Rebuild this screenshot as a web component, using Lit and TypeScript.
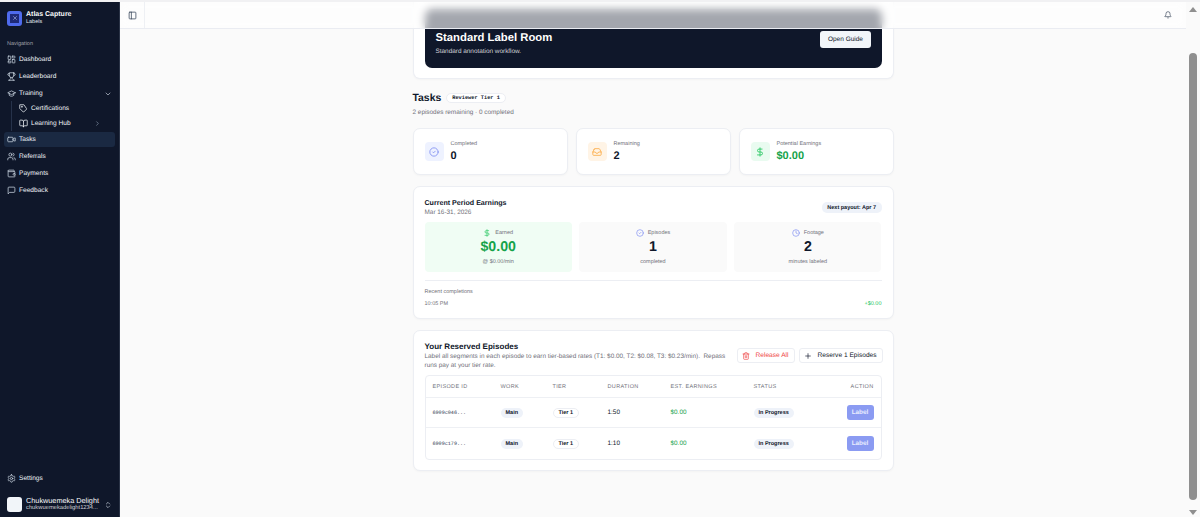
import { LitElement, html, css, svg } from "lit";
import { customElement } from "lit/decorators.js";

const ic = (body: unknown, size = 16) => html`<svg class="ic" width=${size} height=${size} viewBox="0 0 24 24" fill="none" stroke="currentColor" stroke-width="2" stroke-linecap="round" stroke-linejoin="round">${body}</svg>`;

const I = {
  dash: svg`<rect x="3" y="3" width="7" height="9" rx="1"/><rect x="14" y="3" width="7" height="5" rx="1"/><rect x="14" y="12" width="7" height="9" rx="1"/><rect x="3" y="16" width="7" height="5" rx="1"/>`,
  trophy: svg`<path d="M6 9H4.5a2.5 2.5 0 0 1 0-5H6"/><path d="M18 9h1.5a2.5 2.5 0 0 0 0-5H18"/><path d="M4 22h16"/><path d="M10 14.66V17c0 .55-.47.98-.97 1.21C7.85 18.75 7 20.24 7 22"/><path d="M14 14.66V17c0 .55.47.98.97 1.21C16.15 18.75 17 20.24 17 22"/><path d="M18 2H6v7a6 6 0 0 0 12 0V2Z"/>`,
  grad: svg`<path d="M22 10 12 5 2 10l10 5 10-5Z"/><path d="M6 12v5c3 3 9 3 12 0v-5"/>`,
  chevD: svg`<path d="m6 9 6 6 6-6"/>`,
  chevR: svg`<path d="m9 18 6-6-6-6"/>`,
  tag: svg`<path d="M12 2H2v10l9.29 9.29a1 1 0 0 0 1.41 0l7.59-7.59a1 1 0 0 0 0-1.41Z"/><circle cx="7.5" cy="7.5" r="1"/>`,
  book: svg`<path d="M12 7v14"/><path d="M3 18a1 1 0 0 1-1-1V4a1 1 0 0 1 1-1h5a4 4 0 0 1 4 4 4 4 0 0 1 4-4h5a1 1 0 0 1 1 1v13a1 1 0 0 1-1 1h-6a3 3 0 0 0-3 3 3 3 0 0 0-3-3Z"/>`,
  video: svg`<path d="m16 13 5.2 3.5a.5.5 0 0 0 .8-.4V7.9a.5.5 0 0 0-.8-.4L16 11"/><rect x="2" y="6" width="14" height="12" rx="2"/>`,
  users: svg`<path d="M16 21v-2a4 4 0 0 0-4-4H6a4 4 0 0 0-4 4v2"/><circle cx="9" cy="7" r="4"/><path d="M22 21v-2a4 4 0 0 0-3-3.87"/><path d="M16 3.13a4 4 0 0 1 0 7.75"/>`,
  wallet: svg`<path d="M19 7V4a1 1 0 0 0-1-1H5a2 2 0 0 0 0 4h15a1 1 0 0 1 1 1v4h-3a2 2 0 0 0 0 4h3a1 1 0 0 0 1-1v-2a1 1 0 0 0-1-1"/><path d="M3 5v14a2 2 0 0 0 2 2h15a1 1 0 0 0 1-1v-4"/>`,
  msg: svg`<path d="M21 15a2 2 0 0 1-2 2H7l-4 4V5a2 2 0 0 1 2-2h14a2 2 0 0 1 2 2z"/>`,
  gear: svg`<path d="M12.22 2h-.44a2 2 0 0 0-2 2v.18a2 2 0 0 1-1 1.73l-.43.25a2 2 0 0 1-2 0l-.15-.08a2 2 0 0 0-2.73.73l-.22.38a2 2 0 0 0 .73 2.73l.15.1a2 2 0 0 1 1 1.72v.51a2 2 0 0 1-1 1.74l-.15.09a2 2 0 0 0-.73 2.73l.22.38a2 2 0 0 0 2.73.73l.15-.08a2 2 0 0 1 2 0l.43.25a2 2 0 0 1 1 1.73V20a2 2 0 0 0 2 2h.44a2 2 0 0 0 2-2v-.18a2 2 0 0 1 1-1.73l.43-.25a2 2 0 0 1 2 0l.15.08a2 2 0 0 0 2.73-.73l.22-.39a2 2 0 0 0-.73-2.73l-.15-.08a2 2 0 0 1-1-1.74v-.5a2 2 0 0 1 1-1.74l.15-.09a2 2 0 0 0 .73-2.73l-.22-.38a2 2 0 0 0-2.73-.73l-.15.08a2 2 0 0 1-2 0l-.43-.25a2 2 0 0 1-1-1.73V4a2 2 0 0 0-2-2z"/><circle cx="12" cy="12" r="3"/>`,
  updown: svg`<path d="m7 15 5 5 5-5"/><path d="m7 9 5-5 5 5"/>`,
  panel: svg`<rect width="18" height="18" x="3" y="3" rx="2"/><path d="M9 3v18"/>`,
  bell: svg`<path d="M10.27 21a2 2 0 0 0 3.46 0"/><path d="M3.26 15.33A1 1 0 0 0 4 17h16a1 1 0 0 0 .74-1.67C19.41 13.96 18 12.5 18 8A6 6 0 0 0 6 8c0 4.5-1.41 5.96-2.74 7.33"/>`,
  check: svg`<circle cx="12" cy="12" r="10"/><path d="m9 12 2 2 4-4"/>`,
  inbox: svg`<path d="M22 12h-6l-2 3h-4l-2-3H2"/><path d="M5.45 5.11 2 12v6a2 2 0 0 0 2 2h16a2 2 0 0 0 2-2v-6l-3.45-6.89A2 2 0 0 0 16.76 4H7.24a2 2 0 0 0-1.79 1.11z"/>`,
  dollar: svg`<path d="M12 2v20"/><path d="M17 5H9.5a3.5 3.5 0 0 0 0 7h5a3.5 3.5 0 0 1 0 7H6"/>`,
  clock: svg`<circle cx="12" cy="12" r="10"/><path d="M12 6v6l4 2"/>`,
  trash: svg`<path d="M3 6h18"/><path d="M19 6v14a2 2 0 0 1-2 2H7a2 2 0 0 1-2-2V6"/><path d="M8 6V4a2 2 0 0 1 2-2h4a2 2 0 0 1 2 2v2"/><path d="M10 11v6"/><path d="M14 11v6"/>`,
  plus: svg`<path d="M5 12h14"/><path d="M12 5v14"/>`,
};

@customElement("app-root")
export class AppRoot extends LitElement {
  static styles = css`
    :host { display: block; width: 1200px; height: 517px; overflow: hidden; background: #fff; font-family: "Liberation Sans", Arial, sans-serif; color: #0f172a; text-rendering: geometricPrecision; }
    * { box-sizing: border-box; }
    .ic { display: block; flex: none; }
    .frame { display: flex; flex-direction: column; height: 517px; }
    .topline { height: 2px; flex: none; background: #f1f1f3; }
    .body { display: flex; flex: 1; min-height: 0; }

    .side { width: 120px; flex: none; background: #0f172a; color: #f1f5f9; display: flex; flex-direction: column; padding: 8px 4px 0; font-size: 6.6px; border-right: 1px solid #2a3346; }
    .brand { display: flex; align-items: center; gap: 4px; padding: 0 3px; height: 16px; }
    .logo { width: 15px; height: 15px; background: #4f6bed; border-radius: 3px; display: flex; align-items: center; justify-content: center; }
    .logo i { display: flex; align-items: center; justify-content: center; width: 9px; height: 9px; background: #1e2a78; color: #cbd5ff; }
    .brand b { display: block; font-size: 7px; color: #f8fafc; line-height: 8px; }
    .brand small { display: block; font-size: 5.5px; line-height: 7px; color: #e2e8f0; }
    .navlabel { font-size: 5.5px; color: #a1a1aa; margin: 14px 0 4px 3px; line-height: 8px; }
    .item { display: flex; align-items: center; gap: 3px; height: 15px; margin-bottom: 2px; padding: 0 3px; border-radius: 3px; white-space: nowrap; }
    .item .ic { color: #cbd5e1; }
    .item.active { background: #1a2942; }
    .item .end { margin-left: auto; margin-right: 0; color: #94a3b8; }
    .subs { margin: -2px 0 1px 7px; padding-left: 3px; border-left: 1px solid #26324a; }
    .sub { display: flex; align-items: center; gap: 3px; height: 15px; padding: 0 4px; white-space: nowrap; }
    .sub .end { margin-left: auto; margin-right: 10px; color: #94a3b8; }
    .spacer { flex: 1; }
    .user { display: flex; align-items: center; gap: 4px; padding: 0 3px; height: 15px; margin: 9px 0 5px; }
    .avatar { width: 15px; height: 15px; border-radius: 3px; background: #f1f5f9; flex: none; }
    .user b { display: block; font-size: 7.3px; font-weight: 400; color: #f8fafc; line-height: 8px; white-space: nowrap; }
    .user small { display: block; font-size: 5.8px; line-height: 7px; color: #d4d4d8; white-space: nowrap; }
    .user .end { margin-left: auto; color: #cbd5e1; }

    .mainwrap { flex: 1; position: relative; min-width: 0; background: #fafafa; overflow: hidden; }
    .top { position: absolute; left: 0; right: 0; top: 0; height: 27px; z-index: 2; background: rgba(255,255,255,.62); backdrop-filter: blur(4px); border-bottom: 1px solid #eaecf2; display: flex; align-items: center; justify-content: space-between; }
    .toggle { width: 25px; height: 26px; border-right: 1px solid #eef0f4; display: flex; align-items: center; justify-content: center; color: #334155; }
    .bell { margin-right: 14px; color: #334155; }
    .content { width: 481px; margin: 0 auto; display: flex; flex-direction: column; }
    .card { background: #fff; border: 1px solid #eceef3; border-radius: 7px; box-shadow: 0 1px 2px rgba(15,23,42,.03); }
    .bannercard { padding: 8px 11px 11px; height: 78px; margin-top: -1px; border-top: 0; border-radius: 0 0 7px 7px; }
    .banner { height: 59px; background: #0f172a; border-radius: 7px; color: #fff; display: flex; justify-content: space-between; padding: 21px 11px 0; }
    .banner h2 { font-size: 11.3px; line-height: 16px; margin: 0; font-weight: 700; }
    .banner p { font-size: 6.4px; line-height: 10px; margin: 1px 0 0; color: #d4d4d8; }
    .guide { background: #f1f5f9; color: #0f172a; height: 17px; padding: 0 7.5px; margin-top: 1px; border-radius: 3px; font-size: 6.5px; display: flex; align-items: center; }

    .title { display: flex; align-items: center; gap: 5px; margin-top: 11px; height: 16px; }
    .title h1 { margin: 0; font-size: 10.4px; font-weight: 700; }
    .tier { font-family: "Liberation Mono", monospace; font-size: 5.3px; font-weight: 700; height: 10px; padding: 0 5px; border: 1px solid #eceef3; background: #fff; border-radius: 6px; display: flex; align-items: center; }
    .subtitle { font-size: 6.4px; color: #71717a; margin-top: 2px; line-height: 10px; }

    .stats { display: grid; grid-template-columns: repeat(3, 1fr); gap: 8px; margin-top: 10px; }
    .stat { height: 47px; display: flex; align-items: center; gap: 7px; padding: 0 11px; }
    .sicon { width: 19px; height: 19px; border-radius: 4px; display: flex; align-items: center; justify-content: center; flex: none; }
    .blue { background: #eef2ff; color: #7e8ef1; }
    .orange { background: #fff4e6; color: #fbab45; }
    .green { background: #e9fbf0; color: #22c55e; }
    .sl { font-size: 5.5px; line-height: 7px; color: #71717a; }
    .sv { font-size: 11px; font-weight: 700; line-height: 13px; margin-top: 2px; }
    .sv.g { color: #16a34a; }

    .earn { margin-top: 11px; height: 133px; padding: 10px 11px 0; }
    .earnhead { display: flex; justify-content: space-between; align-items: center; height: 21px; }
    .earnhead b { font-size: 7.1px; display: block; line-height: 10px; }
    .earnhead small { font-size: 6.4px; color: #71717a; display: block; line-height: 10px; }
    .payout { font-size: 5.5px; font-weight: 700; background: #eef2f9; height: 10.5px; border-radius: 5px; padding: 0 5.5px; display: flex; align-items: center; }
    .tiles { display: grid; grid-template-columns: repeat(3, 1fr); gap: 7.5px; margin-top: 4px; }
    .tile { height: 50px; border-radius: 4px; background: #fafafa; display: flex; flex-direction: column; align-items: center; padding-top: 7px; }
    .tile.g { background: #f0fdf4; }
    .tl { display: flex; align-items: center; gap: 4px; font-size: 5.5px; line-height: 8px; color: #71717a; }
    .tl .ic { color: #7e8ef1; }
    .tile.g .tl .ic { color: #22c55e; }
    .tv { font-size: 14.2px; font-weight: 700; line-height: 18px; margin-top: 1px; }
    .tile.g .tv { color: #16a34a; }
    .ts { font-size: 5.5px; color: #71717a; line-height: 8px; margin-top: 2px; }
    .rule { height: 1px; background: #eceef3; margin-top: 8px; }
    .recent { font-size: 5.5px; line-height: 8px; color: #71717a; margin-top: 7px; }
    .row { display: flex; justify-content: space-between; font-size: 5.5px; line-height: 8px; color: #71717a; margin-top: 4px; }
    .row em { font-style: normal; color: #22c55e; }

    .res { margin-top: 11px; height: 141px; padding: 11px 11px 0; }
    .reshead { display: flex; justify-content: space-between; align-items: flex-start; gap: 2px; }
    .reshead b { font-size: 8px; line-height: 10px; display: block; }
    .reshead p { margin: 0; font-size: 6.4px; line-height: 9.3px; color: #71717a; width: 310px; }
    .btns { display: flex; gap: 4px; margin-top: 6px; flex: none; }
    .btn { height: 15px; border: 1px solid #eceef3; border-radius: 3px; background: #fff; display: flex; align-items: center; gap: 6px; font-size: 6.6px; padding: 0 5px 0 4px; white-space: nowrap; }
    .btn.red { color: #ef4444; }
    .tablebox { border: 1px solid #eceef3; border-radius: 4px; margin-top: 4px; height: 85px; }
    .gridrow { display: grid; grid-template-columns: 68px 52px 55px 63px 83px 1fr 60px; align-items: center; padding: 1px 7px 0; }
    .gridrow.h { height: 22px; font-size: 5.5px; letter-spacing: .35px; color: #71717a; border-bottom: 1px solid #eef0f4; }
    .gridrow.d { height: 30.5px; font-size: 6.4px; border-bottom: 1px solid #eef0f4; }
    .gridrow.d:last-child { border-bottom: 0; }
    .r { text-align: right; justify-self: end; }
    .mono { font-family: "Liberation Mono", monospace; font-size: 5.1px; color: #334155; }
    .pill { display: inline-flex; align-items: center; justify-self: start; height: 10px; padding: 0 5px; border-radius: 5px; background: #eef2f9; font-size: 5.5px; font-weight: 700; }
    .pill.o { background: #fff; border: 1px solid #eceef3; }
    .money { color: #16a34a; }
    .label { width: 27px; height: 15px; background: #8b9bf2; color: #e9edff; border-radius: 3px; font-size: 6.4px; font-weight: 700; display: flex; align-items: center; justify-content: center; justify-self: end; }

    .sb { width: 14px; flex: none; background: #fafafa; display: flex; flex-direction: column; align-items: center; }
    .arrow { width: 0; height: 0; border-left: 4px solid transparent; border-right: 4px solid transparent; margin-top: 5px; }
    .up { border-bottom: 5px solid #8f8f8f; }
    .dn { border-top: 5px solid #8f8f8f; margin: 0 0 2px; }
    .thumb { width: 8px; height: 447px; margin-top: 41px; border-radius: 4px; background: #8f8f8f; }
    .sbgap { flex: 1; }
  `;

  private nav(icon: unknown, text: string, cls = "") {
    return html`<div class="item ${cls}">${ic(icon, 9)}<span>${text}</span></div>`;
  }

  private row(id: string, dur: string) {
    return html`<div class="gridrow d">
      <span class="mono">${id}</span><span class="pill">Main</span><span class="pill o">Tier 1</span>
      <span>${dur}</span><span class="money">$0.00</span><span class="pill">In Progress</span><span class="label">Label</span>
    </div>`;
  }

  private tile(icon: unknown, label: string, value: string, sub: string, cls = "") {
    return html`<div class="tile ${cls}">
      <div class="tl">${ic(icon, 8)}<span>${label}</span></div>
      <div class="tv">${value}</div><div class="ts">${sub}</div>
    </div>`;
  }

  private stat(icon: unknown, color: string, label: string, value: string, vc = "") {
    return html`<div class="card stat">
      <div class="sicon ${color}">${ic(icon, 10)}</div>
      <div><div class="sl">${label}</div><div class="sv ${vc}">${value}</div></div>
    </div>`;
  }

  render() {
    return html`<div class="frame">
      <div class="topline"></div>
      <div class="body">
        <aside class="side">
          <div class="brand">
            <div class="logo"><i>${ic(svg`<path d="M6 6l12 12M18 6 6 18"/>`, 6)}</i></div>
            <div><b>Atlas Capture</b><small>Labels</small></div>
          </div>
          <div class="navlabel">Navigation</div>
          ${this.nav(I.dash, "Dashboard")}
          ${this.nav(I.trophy, "Leaderboard")}
          <div class="item">${ic(I.grad, 9)}<span>Training</span><span class="end">${ic(I.chevD, 8)}</span></div>
          <div class="subs">
            <div class="sub">${ic(I.tag, 9)}<span>Certifications</span></div>
            <div class="sub">${ic(I.book, 9)}<span>Learning Hub</span><span class="end">${ic(I.chevR, 7)}</span></div>
          </div>
          ${this.nav(I.video, "Tasks", "active")}
          ${this.nav(I.users, "Referrals")}
          ${this.nav(I.wallet, "Payments")}
          ${this.nav(I.msg, "Feedback")}
          <div class="spacer"></div>
          ${this.nav(I.gear, "Settings")}
          <div class="user">
            <div class="avatar"></div>
            <div><b>Chukwuemeka Delight</b><small>chukwuemekadelight1234...</small></div>
            <span class="end">${ic(I.updown, 8)}</span>
          </div>
        </aside>
        <div class="mainwrap">
          <header class="top">
            <div class="toggle">${ic(I.panel, 9)}</div>
            <div class="bell">${ic(I.bell, 8)}</div>
          </header>
          <main class="content">
            <div class="card bannercard">
              <div class="banner">
                <div><h2>Standard Label Room</h2><p>Standard annotation workflow.</p></div>
                <div class="guide">Open Guide</div>
              </div>
            </div>
            <div class="title"><h1>Tasks</h1><span class="tier">Reviewer Tier 1</span></div>
            <div class="subtitle">2 episodes remaining · 0 completed</div>
            <div class="stats">
              ${this.stat(I.check, "blue", "Completed", "0")}
              ${this.stat(I.inbox, "orange", "Remaining", "2")}
              ${this.stat(I.dollar, "green", "Potential Earnings", "$0.00", "g")}
            </div>
            <section class="card earn">
              <div class="earnhead">
                <div><b>Current Period Earnings</b><small>Mar 16-31, 2026</small></div>
                <span class="payout">Next payout: Apr 7</span>
              </div>
              <div class="tiles">
                ${this.tile(I.dollar, "Earned", "$0.00", "@ $0.00/min", "g")}
                ${this.tile(I.check, "Episodes", "1", "completed")}
                ${this.tile(I.clock, "Footage", "2", "minutes labeled")}
              </div>
              <div class="rule"></div>
              <div class="recent">Recent completions</div>
              <div class="row"><span>10:05 PM</span><em>+$0.00</em></div>
            </section>
            <section class="card res">
              <div class="reshead">
                <div><b>Your Reserved Episodes</b><p>Label all segments in each episode to earn tier-based rates (T1: $0.00, T2: $0.08, T3: $0.23/min).&nbsp; Repass runs pay at your tier rate.</p></div>
                <div class="btns">
                  <div class="btn red">${ic(I.trash, 8)}<span>Release All</span></div>
                  <div class="btn">${ic(I.plus, 8)}<span>Reserve 1 Episodes</span></div>
                </div>
              </div>
              <div class="tablebox">
                <div class="gridrow h"><span>EPISODE ID</span><span>WORK</span><span>TIER</span><span>DURATION</span><span>EST. EARNINGS</span><span>STATUS</span><span class="r">ACTION</span></div>
                ${this.row("6909c046...", "1:50")}
                ${this.row("6909c179...", "1:10")}
              </div>
            </section>
          </main>
        </div>
        <div class="sb"><div class="arrow up"></div><div class="thumb"></div><div class="sbgap"></div><div class="arrow dn"></div></div>
      </div>
    </div>`;
  }
}
